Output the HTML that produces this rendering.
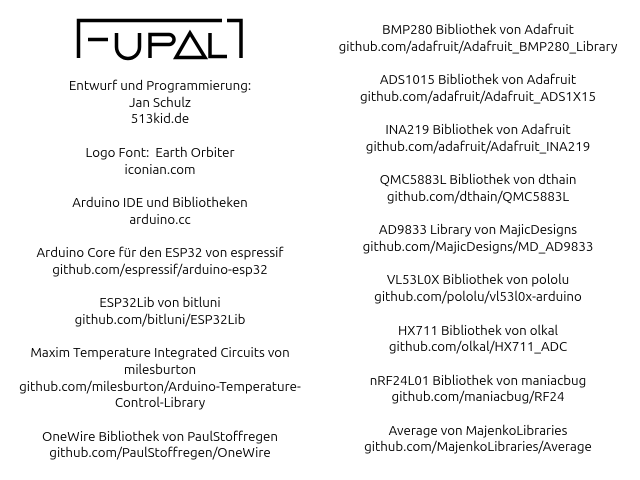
<!DOCTYPE html>
<html><head><meta charset="utf-8"><style>
html,body{margin:0;padding:0;background:#fff;width:640px;height:480px;overflow:hidden}
body{font-family:"Ubuntu","DejaVu Sans","Liberation Sans",sans-serif;font-size:13.3px;color:#000}
.col{position:absolute;text-align:center;line-height:16.7px;white-space:nowrap}
#l{left:0;width:320px;top:78px}
#r{left:318px;width:320px;top:22px}
p{margin:0 0 16.7px 0}
</style></head><body>
<svg style="position:absolute;left:0;top:0" width="260" height="70">
<g fill="none" stroke="#000" stroke-width="3.5">
<path d="M78.5 58V20.5H222"/>
<path d="M88 39.5H108"/>
<path d="M116.5 33V47a11.5 11.5 0 0 0 23 0V33"/>
<path d="M150 58V34.5H169a5 5 0 0 1 0 10H151"/>
<path d="M190 33L176 57.5H205Z" stroke-linejoin="miter"/>
<path d="M210 33V56.5H227"/>
<path d="M227 20.5H241V58"/>
</g></svg>
<div class="col" id="l">
<p>Entwurf und Programmierung:<br>Jan Schulz<br>513kid.de</p>
<p>Logo Font:&nbsp; Earth Orbiter<br>iconian.com</p>
<p>Arduino IDE und Bibliotheken<br>arduino.cc</p>
<p>Arduino Core für den ESP32 von espressif<br>github.com/espressif/arduino-esp32</p>
<p>ESP32Lib von bitluni<br>github.com/bitluni/ESP32Lib</p>
<p>Maxim Temperature Integrated Circuits von<br>milesburton<br>github.com/milesburton/Arduino-Temperature-<br>Control-Library</p>
<p>OneWire Bibliothek von PaulStoffregen<br>github.com/PaulStoffregen/OneWire</p>
</div>
<div class="col" id="r">
<p>BMP280 Bibliothek von Adafruit<br>github.com/adafruit/Adafruit_BMP280_Library</p>
<p>ADS1015 Bibliothek von Adafruit<br>github.com/adafruit/Adafruit_ADS1X15</p>
<p>INA219 Bibliothek von Adafruit<br>github.com/adafruit/Adafruit_INA219</p>
<p>QMC5883L Bibliothek von dthain<br>github.com/dthain/QMC5883L</p>
<p>AD9833 Library von MajicDesigns<br>github.com/MajicDesigns/MD_AD9833</p>
<p>VL53L0X Bibliothek von pololu<br>github.com/pololu/vl53l0x-arduino</p>
<p>HX711 Bibliothek von olkal<br>github.com/olkal/HX711_ADC</p>
<p>nRF24L01 Bibliothek von maniacbug<br>github.com/maniacbug/RF24</p>
<p>Average von MajenkoLibraries<br>github.com/MajenkoLibraries/Average</p>
</div>
</body></html>
